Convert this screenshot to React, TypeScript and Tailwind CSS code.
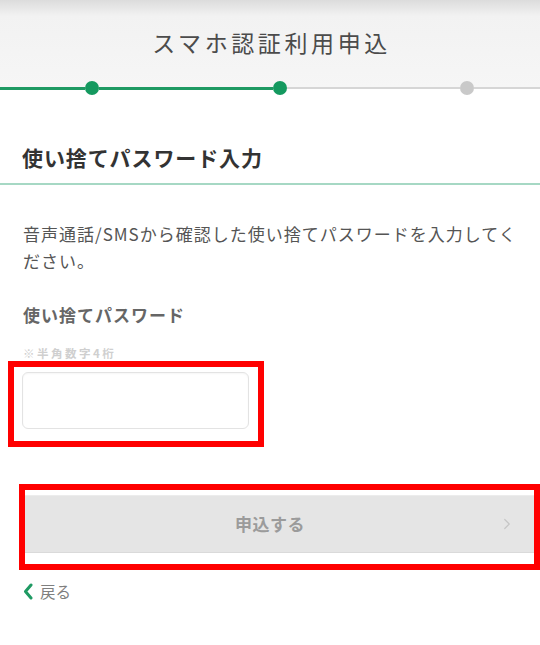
import { ChevronRight } from 'lucide-react';

const FONT = "font-['Noto_Sans_CJK_JP','Noto_Sans',sans-serif]";

function Progress() {
  return (
    <div className="-mt-[7px] flex h-[14px] items-center">
      <div className="h-[3px] w-[85px] bg-[#1f9a63]" />
      <div className="h-[14px] w-[14px] shrink-0 rounded-full bg-[#14995f]" />
      <div className="h-[3px] w-[174px] bg-[#1f9a63]" />
      <div className="h-[14px] w-[14px] shrink-0 rounded-full bg-[#14995f]" />
      <div className="h-[2px] w-[173px] bg-[#d6d6d6]" />
      <div className="h-[14px] w-[14px] shrink-0 rounded-full bg-[#c9c9c9]" />
      <div className="h-[2px] flex-1 bg-[#d6d6d6]" />
    </div>
  );
}

export default function App() {
  return (
    <div className={`${FONT} h-[645px] w-[540px] overflow-hidden bg-white`}>
      <header className="flex h-[88px] justify-center bg-[linear-gradient(180deg,#dcdcdc_0px,#f2f2f2_16px,#f6f6f6_100%)] pt-[26px]">
        <h1 className="pl-[3px] text-[23px] leading-[32px] tracking-[3.6px] text-[#4b4b4b]">スマホ認証利用申込</h1>
      </header>
      <Progress />

      <div className="mt-[48px] border-b-2 border-[#a6d8c4] px-[22px] pb-[12px]">
        <h2 className="text-[21px] font-bold leading-[28px] tracking-[0.9px] text-[#333]">使い捨てパスワード入力</h2>
      </div>

      <p className="mt-[35px] pl-[23px] pr-[15px] text-[17px] leading-[27px] tracking-[1px] text-[#555]">
        音声通話/SMSから確認した使い捨てパスワードを入力してください。
      </p>

      <div className="mt-[29px] px-[23px] text-[17px] font-bold leading-[24px] tracking-[1px] text-[#666]">使い捨てパスワード</div>
      <div className="mt-[18px] px-[23px] text-[11.5px] font-bold leading-[16px] tracking-[2.5px] text-[#cfcfcf]">※半角数字4桁</div>

      <div className="ml-[8px] w-[256px] border-[6px] border-[#ff0000] pb-[12px] pl-[8px] pr-[9px] pt-[5px]">
        <input
          aria-label="使い捨てパスワード"
          className="block h-[57px] w-full rounded-[6px] border border-[#e3e3e3] bg-white shadow-[inset_0_1px_2px_rgba(0,0,0,0.04)] outline-none"
        />
      </div>

      <div className="ml-[19px] mt-[37px] w-[521px] border-[6px] border-[#ff0000] pb-[11px] pt-[5px]">
        <button className="relative flex h-[58px] w-full items-center justify-center border-b border-t border-b-[#dadada] border-t-[#ececec] bg-[#e5e5e5] pr-[19px]">
          <span className="text-[17px] font-bold tracking-[0.5px] text-[#9b9b9b]">申込する</span>
          <ChevronRight className="absolute right-[18px] top-1/2 h-[18px] w-[18px] -translate-y-1/2 text-[#c6c6c6]" strokeWidth={1.6} />
        </button>
      </div>

      <a className="mt-[10px] flex items-center gap-[7px] pl-[23px] text-[15.5px] leading-[22px] text-[#7f7f7f]">
        <svg width="10" height="17" viewBox="0 0 10 17" fill="none" aria-hidden="true">
          <path d="M8 2 L2.5 8.5 L8 15" stroke="#1f9a63" strokeWidth="3" strokeLinecap="round" strokeLinejoin="round" />
        </svg>
        戻る
      </a>
    </div>
  );
}
